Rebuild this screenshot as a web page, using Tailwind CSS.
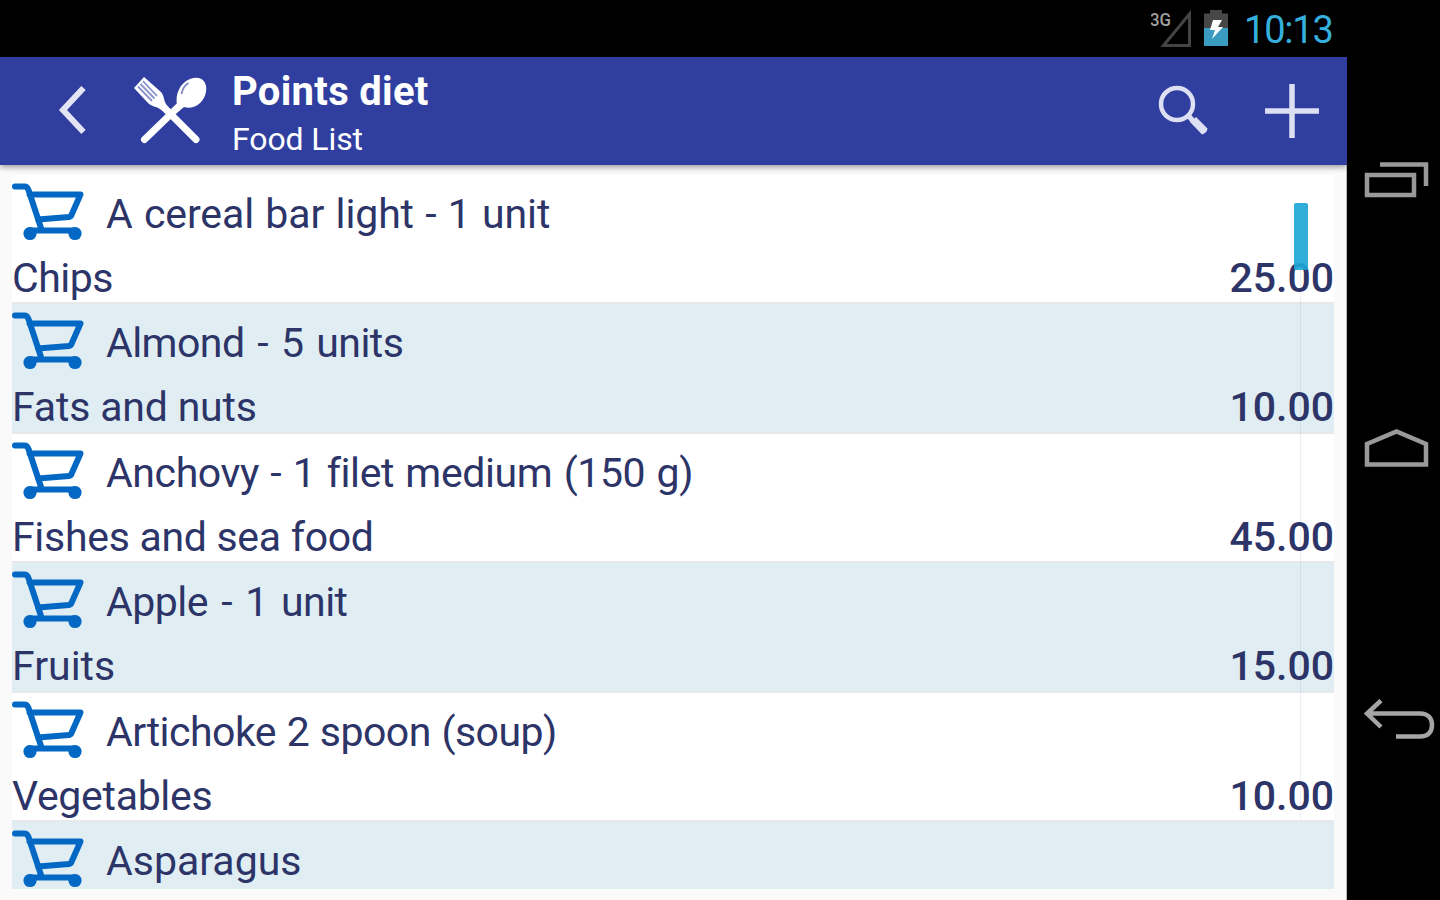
<!DOCTYPE html>
<html lang="en">
<head>
<meta charset="utf-8">
<title>Points diet</title>
<script src="https://cdn.jsdelivr.net/npm/@tailwindcss/browser@4"></script>
</head>
<body class="w-[1440px] h-[900px] overflow-hidden bg-black font-['Roboto',sans-serif]">
<svg class="hidden">
  <symbol id="cart" viewBox="0 0 74 60">
    <path d="M3 4.500H12.500C14.500 4.500 15.500 5.500 16.500 8L29 46M17.500 12.500H68.500L59 34L57 35L26 37.500M17 48.500H63" fill="none" stroke="#0368c4" stroke-width="6" stroke-linecap="round" stroke-linejoin="round"/>
    <circle cx="18" cy="51.500" r="6.600" fill="#0368c4"/><circle cx="63" cy="51.500" r="6.600" fill="#0368c4"/>
  </symbol>
</svg>
<div class="flex w-full h-full">
  <div class="w-[1347px] h-full flex flex-col">
    <div class="h-[57px] shrink-0 bg-black flex items-start justify-end pr-[14px]">
      <svg class="w-[42px] h-[40px] mt-[9px]" viewBox="0 0 42 40">
        <path d="M12.500 36.500H38.500V5Z" fill="none" stroke="#444" stroke-width="3"/>
        <text x="-1" y="17" font-family="Roboto" font-size="19" font-weight="500" fill="#a0a0a0" textLength="21" lengthAdjust="spacingAndGlyphs">3G</text>
      </svg>
      <svg class="w-[24px] h-[36px] mt-[10px] ml-[11px]" viewBox="0 0 24 36">
        <path d="M0 3.500H6V0H18V3.500H24V18H0Z" fill="#474747"/><path d="M0 18H24V36H0Z" fill="#3a9cc0"/>
        <path d="M9 10H18L14 17H19L8 29L11 20H6Z" fill="#fff"/>
      </svg>
      <div class="ml-[16px] mt-[7px] w-[89px] text-[38px] leading-[46px] tracking-[-1.2px] text-[#35b0de] whitespace-nowrap">10:13</div>
    </div>
    <header class="h-[108px] shrink-0 bg-[#303f9f] flex items-center z-10 shadow-[0_2px_6px_rgba(0,0,0,0.4)]">
      <svg class="ml-[58px] w-[30px] h-[50px]" viewBox="0 0 30 50"><path d="M25.500 2L5 24L25.500 46" fill="none" stroke="#e3e4f4" stroke-width="6"/></svg>
      <svg class="ml-[46px] w-[76px] h-[72px]" viewBox="0 0 76 72">
        <path d="M55 22L10.500 65M25 28L62 65" stroke="#fff" stroke-width="7" stroke-linecap="round" transform="translate(0 -.5)"/>
        <path d="M43 30C41 19 46 8 56 4C67 0 74 7 72 17C70 28 60 35 50 32L40 40L36 36Z" fill="#fff"/>
        <path d="M47.500 19C48.500 14 51 10 54.500 8" stroke="#8088c4" stroke-width="1.800" fill="none"/>
        <path d="M0 13L10 2L27 17C31 22 29 26 34 32L29 36C23 31 18 32 14 28Z" fill="#fff"/>
        <path d="M4 11.500L18 26M6.500 9L20.500 23.500M9 6.200L23 21" stroke="#8b93cc" stroke-width="1.800"/>
      </svg>
      <div class="ml-[22px] mt-[8px] text-white whitespace-nowrap">
        <div class="-mt-0.5 text-[40px] leading-[50px] tracking-[0.3px] font-bold">Points diet</div>
        <div class="text-[32px] leading-[44px] tracking-[-0.1px]">Food List</div>
      </div>
      <svg class="ml-auto w-[54px] h-[54px]" viewBox="0 0 54 54"><circle cx="20" cy="20" r="16" fill="none" stroke="#dddff2" stroke-width="4.500"/><path d="M30 30L36 37" stroke="#dddff2" stroke-width="5"/><path d="M33 38L39 33L50.500 44.500Q50 49 45 50.500Z" fill="#dddff2"/></svg>
      <svg class="ml-[54px] mr-[28px] w-[54px] h-[54px]" viewBox="0 0 54 54"><path d="M0 27H54M27 0V54" stroke="#dddff2" stroke-width="5.500"/></svg>
    </header>
    <main class="relative flex-1 min-h-0 bg-[#fafafa] pl-3 pr-[12px] pt-[10px] text-[41px] text-[#2c3468] whitespace-nowrap border-r border-[#bbb]">
      <section class="h-[129.4px] bg-white border-b-2 border-[#e6e8eb]">
        <div class="flex h-[71px] pt-[7px]"><svg class="w-[74px] h-[60px]"><use href="#cart"/></svg><span class="ml-[20px] leading-[64px] tracking-[-0.12px] [word-spacing:1.3px]">A cereal bar light - 1 unit</span></div>
        <div class="flex justify-between leading-[64px]"><span class="tracking-[-0.5px]">Chips</span><span class="font-medium">25.00</span></div>
      </section>
      <section class="h-[129.4px] bg-[#e0eef3] border-b-2 border-[#e6e8eb]">
        <div class="flex h-[71px] pt-[7px]"><svg class="w-[74px] h-[60px]"><use href="#cart"/></svg><span class="ml-[20px] leading-[64px] tracking-[-0.55px] [word-spacing:3.2px]">Almond - 5 units</span></div>
        <div class="flex justify-between leading-[64px]"><span class="tracking-[-0.18px]">Fats and nuts</span><span class="font-medium">10.00</span></div>
      </section>
      <section class="h-[129.4px] bg-white border-b-2 border-[#e6e8eb]">
        <div class="flex h-[71px] pt-[7px]"><svg class="w-[74px] h-[60px]"><use href="#cart"/></svg><span class="ml-[20px] leading-[64px] tracking-[-0.4px] [word-spacing:1.6px]">Anchovy - 1 filet medium (150 g)</span></div>
        <div class="flex justify-between leading-[64px]"><span class="tracking-[-0.29px]">Fishes and sea food</span><span class="font-medium">45.00</span></div>
      </section>
      <section class="h-[129.4px] bg-[#e0eef3] border-b-2 border-[#e6e8eb]">
        <div class="flex h-[71px] pt-[7px]"><svg class="w-[74px] h-[60px]"><use href="#cart"/></svg><span class="ml-[20px] leading-[64px] tracking-[-0.5px] [word-spacing:3.5px]">Apple - 1 unit</span></div>
        <div class="flex justify-between leading-[64px]"><span>Fruits</span><span class="font-medium">15.00</span></div>
      </section>
      <section class="h-[129.4px] bg-white border-b-2 border-[#e6e8eb]">
        <div class="flex h-[71px] pt-[7px]"><svg class="w-[74px] h-[60px]"><use href="#cart"/></svg><span class="ml-[20px] leading-[64px] tracking-[-0.5px] [word-spacing:0.9px]">Artichoke 2 spoon (soup)</span></div>
        <div class="flex justify-between leading-[64px]"><span class="tracking-[-0.3px]">Vegetables</span><span class="font-medium">10.00</span></div>
      </section>
      <section class="h-[67px] bg-[#e0eef3]">
        <div class="flex h-[67px] pt-[7px]"><svg class="w-[74px] h-[60px]"><use href="#cart"/></svg><span class="ml-[20px] leading-[64px]">Asparagus</span></div>
      </section>
      <div class="absolute left-[1300px] top-[105px] w-px h-[550px] bg-[#27306b]/8"></div>
      <div class="absolute left-[1294px] top-[38px] w-[14px] h-[67px] rounded-[2px] bg-[#1ea7d6]/92"></div>
    </main>
  </div>
  <nav class="flex-1 bg-black flex flex-col items-start pl-[17px]">
    <svg class="mt-[161px] w-[66px] h-[38px] shrink-0" viewBox="0 0 66 38"><path d="M3 14H50V34H3ZM16 3.500H62V25" fill="none" stroke="#999" stroke-width="4.500"/></svg>
    <svg class="mt-[230px] w-[66px] h-[40px] shrink-0" viewBox="0 0 66 40"><path d="M3 35.500V15L32.500 2.500L62 15V35.500Z" fill="none" stroke="#999" stroke-width="4.500"/></svg>
    <svg class="mt-[230px] w-[72px] h-[42px] shrink-0" viewBox="0 0 72 42"><path d="M17 1.500L3 14.500L17 28M3 14.500H56C64 14.500 68 19 68 26C68 33 64 37.500 56 37.500H32" fill="none" stroke="#a5a5a5" stroke-width="4.500"/></svg>
  </nav>
</div>
</body>
</html>
